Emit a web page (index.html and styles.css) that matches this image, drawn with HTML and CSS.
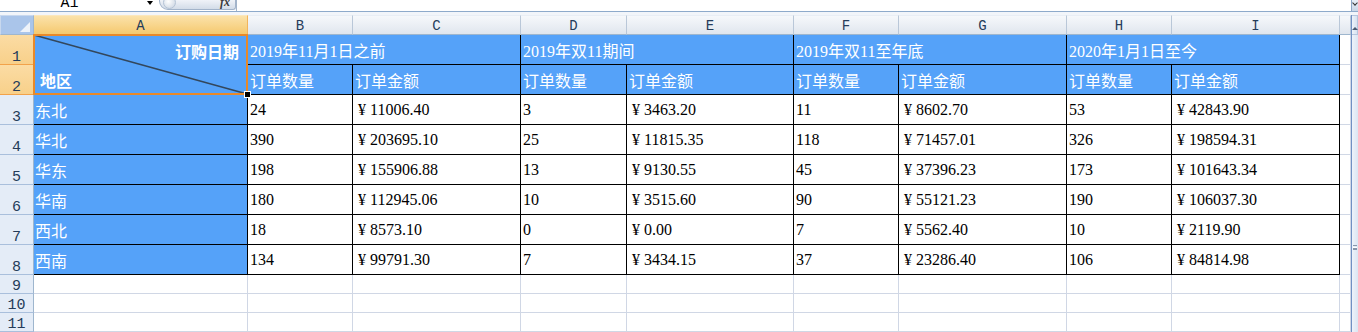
FILE: index.html
```html
<!DOCTYPE html>
<html lang="zh-CN">
<head>
<meta charset="utf-8">
<title>订购统计</title>
<link rel="stylesheet" href="styles.css">
</head>
<body>
<div class="app">
  <div class="fbar">
    <div class="namebox"><span class="nm">A1</span><i class="dd"></i></div>
    <div class="fxbtn"><span class="knob"></span><span class="fx">fx</span></div>
    <div class="finput"></div>
    <div class="fexp"><span class="chev"></span></div>
  </div>
  <div class="sep"></div>
  <div class="main">
    <div class="sheet">
      <!-- header row -->
      <div class="corner"><span class="tri"></span></div>
      <div class="ch sel-col">A</div>
      <div class="ch">B</div>
      <div class="ch">C</div>
      <div class="ch">D</div>
      <div class="ch">E</div>
      <div class="ch">F</div>
      <div class="ch">G</div>
      <div class="ch">H</div>
      <div class="ch">I</div>
      <div class="ch"></div>

      <!-- row 1 -->
      <div class="rh sel-row">1</div>
      <div class="c t b a1">
        <svg class="diag" viewBox="0 0 100 100" preserveAspectRatio="none"><line x1="0" y1="0" x2="100" y2="100" vector-effect="non-scaling-stroke"/></svg>
        <span class="a1-top">订购日期</span>
        <span class="a1-bot">地区</span>
        <span class="selbox"></span>
        <span class="handle"></span>
      </div>
      <div class="c t b span2">2019年11月1日之前</div>
      <div class="c t b span2">2019年双11期间</div>
      <div class="c t b span2">2019年双11至年底</div>
      <div class="c t b span2">2020年1月1日至今</div>
      <div class="c"></div>

      <!-- row 2 -->
      <div class="rh sel-row">2</div>
      <div class="c t b">订单数量</div>
      <div class="c t b">订单金额</div>
      <div class="c t b">订单数量</div>
      <div class="c t b">订单金额</div>
      <div class="c t b">订单数量</div>
      <div class="c t b">订单金额</div>
      <div class="c t b">订单数量</div>
      <div class="c t b">订单金额</div>
      <div class="c"></div>

      <!-- row 3 -->
      <div class="rh">3</div>
      <div class="c t b lab">东北</div>
      <div class="c t">24</div><div class="c t m">¥ 11006.40</div>
      <div class="c t">3</div><div class="c t m">¥ 3463.20</div>
      <div class="c t">11</div><div class="c t m">¥ 8602.70</div>
      <div class="c t">53</div><div class="c t m">¥ 42843.90</div>
      <div class="c"></div>

      <!-- row 4 -->
      <div class="rh">4</div>
      <div class="c t b lab">华北</div>
      <div class="c t">390</div><div class="c t m">¥ 203695.10</div>
      <div class="c t">25</div><div class="c t m">¥ 11815.35</div>
      <div class="c t">118</div><div class="c t m">¥ 71457.01</div>
      <div class="c t">326</div><div class="c t m">¥ 198594.31</div>
      <div class="c"></div>

      <!-- row 5 -->
      <div class="rh">5</div>
      <div class="c t b lab">华东</div>
      <div class="c t">198</div><div class="c t m">¥ 155906.88</div>
      <div class="c t">13</div><div class="c t m">¥ 9130.55</div>
      <div class="c t">45</div><div class="c t m">¥ 37396.23</div>
      <div class="c t">173</div><div class="c t m">¥ 101643.34</div>
      <div class="c"></div>

      <!-- row 6 -->
      <div class="rh">6</div>
      <div class="c t b lab">华南</div>
      <div class="c t">180</div><div class="c t m">¥ 112945.06</div>
      <div class="c t">10</div><div class="c t m">¥ 3515.60</div>
      <div class="c t">90</div><div class="c t m">¥ 55121.23</div>
      <div class="c t">190</div><div class="c t m">¥ 106037.30</div>
      <div class="c"></div>

      <!-- row 7 -->
      <div class="rh">7</div>
      <div class="c t b lab">西北</div>
      <div class="c t">18</div><div class="c t m">¥ 8573.10</div>
      <div class="c t">0</div><div class="c t m">¥ 0.00</div>
      <div class="c t">7</div><div class="c t m">¥ 5562.40</div>
      <div class="c t">10</div><div class="c t m">¥ 2119.90</div>
      <div class="c"></div>

      <!-- row 8 -->
      <div class="rh">8</div>
      <div class="c t b lab">西南</div>
      <div class="c t">134</div><div class="c t m">¥ 99791.30</div>
      <div class="c t">7</div><div class="c t m">¥ 3434.15</div>
      <div class="c t">37</div><div class="c t m">¥ 23286.40</div>
      <div class="c t">106</div><div class="c t m">¥ 84814.98</div>
      <div class="c"></div>

      <!-- row 9 -->
      <div class="rh">9</div>
      <div class="c"></div><div class="c"></div><div class="c"></div><div class="c"></div><div class="c"></div>
      <div class="c"></div><div class="c"></div><div class="c"></div><div class="c"></div><div class="c"></div>

      <!-- row 10 -->
      <div class="rh">10</div>
      <div class="c"></div><div class="c"></div><div class="c"></div><div class="c"></div><div class="c"></div>
      <div class="c"></div><div class="c"></div><div class="c"></div><div class="c"></div><div class="c"></div>

      <!-- row 11 -->
      <div class="rh">11</div>
      <div class="c"></div><div class="c"></div><div class="c"></div><div class="c"></div><div class="c"></div>
      <div class="c"></div><div class="c"></div><div class="c"></div><div class="c"></div><div class="c"></div>
    </div>
    <div class="vscroll">
      <div class="vbtn"><span class="up"></span></div>
      <div class="vtrack"><span class="grip"></span></div>
    </div>
  </div>
</div>
</body>
</html>
```

FILE: styles.css
```css
html, body {
  margin: 0;
  padding: 0;
  background: #ffffff;
}
body {
  width: 1358px;
  height: 332px;
  overflow: hidden;
  font-family: "Liberation Serif", "Noto Sans CJK SC", serif;
}
.app {
  width: 1358px;
  height: 332px;
  display: flex;
  flex-direction: column;
}

/* formula bar (top, cut off) */
.fbar {
  display: flex;
  height: 11px;
  overflow: hidden;
  background: #ffffff;
}
.namebox {
  width: 155px;
  display: flex;
  align-items: flex-start;
}
.nm {
  flex: 1;
  text-align: center;
  padding-right: 8px;
  font: 15px/15px "Liberation Mono", monospace;
  margin-top: -4px;
  color: #000;
}
.dd {
  width: 0;
  height: 0;
  border-left: 3px solid transparent;
  border-right: 3px solid transparent;
  border-top: 4px solid #000;
  margin: 1px 2px 0 0;
}
.fxbtn {
  width: 77px;
  margin-left: 4px;
  height: 10px;
  box-sizing: border-box;
  border: 1px solid #a3b4ca;
  border-top: none;
  border-radius: 0 0 3px 9px;
  background: linear-gradient(#f0f3f8, #d3dce8);
  display: flex;
  align-items: flex-start;
  justify-content: space-between;
  overflow: hidden;
}
.knob {
  width: 13px;
  height: 13px;
  margin: -4px 0 0 3px;
  border-radius: 50%;
  background: radial-gradient(circle at 40% 40%, #ffffff, #c6d1df);
  border: 1px solid #b4c2d4;
  box-sizing: border-box;
}
.fx {
  font: italic bold 12px/12px "Liberation Serif", serif;
  color: #3a3a3a;
  margin: -4px 5px 0 0;
}
.finput {
  flex: 1;
  border-left: 1px solid #a3b4ca;
}
.fexp {
  width: 7px;
  box-sizing: border-box;
  border-left: 1px solid #8ca6c8;
  background: linear-gradient(#e7eef7, #c9d6e7);
}
.chev {
  display: block;
  width: 3px;
  height: 3px;
  border-right: 1px solid #333;
  border-bottom: 1px solid #333;
  transform: rotate(45deg);
  margin: 1px 0 0 1px;
}
.sep {
  height: 4px;
  box-sizing: border-box;
  border-top: 1px solid #8eaacb;
  background: #f2f5fa;
}

/* sheet */
.main {
  display: flex;
  height: 317px;
}
.sheet {
  width: 1351px;
  display: grid;
  grid-template-columns: 34px 214px 105px 168px 106px 167px 105px 168px 105px 168px 11px;
  grid-template-rows: 20px repeat(8, 30px) repeat(3, 19px);
}

.corner {
  box-sizing: border-box;
  background: #aac5ea;
  border: 1px solid #c8d8ee;
  border-right-color: #9eb6ce;
  border-bottom-color: #9eb6ce;
  display: flex;
  justify-content: flex-end;
  align-items: flex-end;
  padding: 0 3px 2px 0;
}
.tri {
  width: 0;
  height: 0;
  border-left: 10px solid transparent;
  border-bottom: 10px solid #eef3fa;
}

.ch {
  box-sizing: border-box;
  background: linear-gradient(#f6f8fb, #e0e6ee);
  border-top: 1px solid #e9eef5;
  border-right: 1px solid #b9c7d8;
  border-bottom: 1px solid #9eb6ce;
  text-align: center;
  font: 14px/15px "Liberation Mono", monospace;
  color: #253c5a;
  padding-top: 3px;
  overflow: hidden;
}
.ch.sel-col {
  background: linear-gradient(#fbe2aa, #f5c96f);
  border-top-color: #fbe7bd;
  border-right-color: #f2b45c;
  border-bottom-color: #f29436;
}

.rh {
  box-sizing: border-box;
  background: #e4ecf7;
  border-right: 1px solid #9eb6ce;
  border-bottom: 1px solid #a9bfdc;
  display: flex;
  justify-content: center;
  align-items: flex-end;
  font: 15px/12px "Liberation Mono", monospace;
  color: #253c5a;
  overflow: hidden;
}
.rh.sel-row {
  background: linear-gradient(#fbdca4, #f8d08a);
  border-right-color: #f29436;
  border-bottom-color: #f2a24a;
}

.c {
  box-sizing: border-box;
  border-right: 1px solid #d0d7e5;
  border-bottom: 1px solid #d0d7e5;
  background: #ffffff;
  color: #000000;
  font-size: 16px;
  display: flex;
  align-items: center;
  padding-left: 2px;
  white-space: nowrap;
  overflow: hidden;
}
.c.t {
  border-right-color: #000000;
  border-bottom-color: #000000;
}
.c.b {
  background: #55a2f9;
  color: #ffffff;
}
.c.m {
  padding-left: 5px;
}
.c.lab {
  font-family: "Noto Sans CJK SC", sans-serif;
  padding-left: 1px;
}
.span2 {
  grid-column: span 2;
}

/* merged A1:A2 with diagonal header */
.a1 {
  grid-row: span 2;
  position: relative;
  overflow: visible;
  z-index: 2;
  display: flex;
  flex-direction: column;
  justify-content: space-between;
  align-items: stretch;
  padding: 6px 0 4px 0;
  font-family: "Noto Sans CJK SC", sans-serif;
  font-weight: 700;
  font-size: 16px;
  line-height: 20px;
}
.diag {
  position: absolute;
  left: 0;
  top: 0;
  width: 100%;
  height: 100%;
  overflow: visible;
}
.diag line {
  stroke: #33475c;
  stroke-width: 1.5;
}
.a1-top {
  align-self: flex-end;
  padding-right: 8px;
  position: relative;
}
.a1-bot {
  align-self: flex-start;
  padding-left: 6px;
  position: relative;
}
.selbox {
  position: absolute;
  top: -1px;
  left: -1px;
  right: -1px;
  bottom: -1px;
  border: 2px solid #e8892a;
  pointer-events: none;
}
.handle {
  position: absolute;
  right: -4px;
  bottom: -4px;
  width: 5px;
  height: 5px;
  background: #000000;
  border: 1px solid #ffffff;
}

/* vertical scrollbar */
.vscroll {
  width: 7px;
  box-sizing: border-box;
  border-left: 1px solid #7090c4;
  background: #e4ebf5;
  display: flex;
  flex-direction: column;
}
.vbtn {
  height: 20px;
  box-sizing: border-box;
  border: 1px solid #b5c6de;
  border-left: none;
  background: linear-gradient(90deg, #eef3fa, #d7e2f0);
  display: flex;
  justify-content: center;
  align-items: flex-end;
  padding-bottom: 4px;
}
.up {
  width: 0;
  height: 0;
  border-left: 3px solid transparent;
  border-right: 3px solid transparent;
  border-bottom: 3px solid #4a5b72;
}
.vtrack {
  flex: 1;
  background: linear-gradient(90deg, #eef3fa, #dbe5f2);
  display: flex;
  justify-content: center;
  padding-top: 210px;
}
.grip {
  width: 4px;
  height: 5px;
  border-top: 1px solid #8696ab;
  border-bottom: 1px solid #8696ab;
  box-sizing: border-box;
  background: linear-gradient(#ffffff 0 1px, #8696ab 1px 2px, transparent 2px);
  background-position: 0 1px;
  background-repeat: no-repeat;
}
```
